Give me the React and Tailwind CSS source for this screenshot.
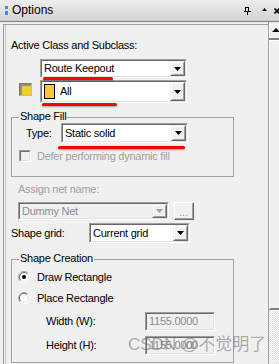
import React from "react";

function DropBtn({ disabled }) {
  return (
    <div className="w-[15px] h-full shrink-0 border border-t-[#f0f0f0] border-l-[#f0f0f0] border-b-[#696969] border-r-[#696969]">
      <div className="w-full h-full flex items-center justify-center bg-[#f0f0f0] border border-t-white border-l-white border-b-[#a0a0a0] border-r-[#a0a0a0]">
        <svg width="7" height="4" viewBox="0 0 7 4">
          <polygon points="0,0 7,0 3.5,4" fill={disabled ? "#a0a0a0" : "#000"} />
        </svg>
      </div>
    </div>
  );
}

function Sunken({ className, inner, children }) {
  return (
    <div className={"flex border border-t-[#a0a0a0] border-l-[#a0a0a0] border-b-white border-r-white " + className}>
      <div className={"flex flex-1 min-w-0 border border-t-[#696969] border-l-[#696969] border-b-[#e3e3e3] border-r-[#e3e3e3] " + inner}>
        {children}
      </div>
    </div>
  );
}

function Combo({ className, children, disabled }) {
  return (
    <Sunken className={className} inner={disabled ? "bg-[#f0f0f0]" : "bg-white"}>
      <div className={"flex flex-1 min-w-0 items-center pl-[2px] whitespace-nowrap " + (disabled ? "text-[#8c8c8c]" : "text-black")}>
        {children}
      </div>
      <DropBtn disabled={disabled} />
    </Sunken>
  );
}

function Radio({ checked }) {
  return (
    <svg width="12" height="12" viewBox="0 0 12 12" className="shrink-0">
      <circle cx="6" cy="6" r="5.5" fill="#fff" />
      <path d="M9.9 2.1 A5.5 5.5 0 0 0 2.1 9.9" stroke="#a0a0a0" strokeWidth="1" fill="none" />
      <path d="M9.9 2.1 A5.5 5.5 0 0 1 2.1 9.9" stroke="#ffffff" strokeWidth="1" fill="none" />
      <path d="M9.2 2.8 A4.5 4.5 0 0 0 2.8 9.2" stroke="#696969" strokeWidth="1" fill="none" />
      <path d="M9.2 2.8 A4.5 4.5 0 0 1 2.8 9.2" stroke="#e3e3e3" strokeWidth="1" fill="none" />
      {checked && <circle cx="6" cy="6" r="2" fill="#000" />}
    </svg>
  );
}

function Group({ title, className, children }) {
  return (
    <div className={"relative border border-[#a0a0a0] " + className}>
      <span className="absolute left-[7px] -top-[8px] px-[1px] bg-[#f0f0f0] leading-[13px] text-black whitespace-nowrap">
        {title}
      </span>
      {children}
    </div>
  );
}

export default function App() {
  return (
    <div className="relative w-[279px] h-[364px] overflow-hidden bg-[#f0f0f0] font-['Liberation_Sans',Arial,sans-serif] text-[11px] leading-[13px] tracking-[-0.25px] text-black">
      {/* Title bar */}
      <div className="flex items-center h-[22px] border-b border-[#7a7a7a] bg-gradient-to-b from-[#eeeeee] to-[#d2d2d2]">
        <div className="ml-[5px] flex flex-col gap-[2px]">
          <div className="w-[3px] h-[3px] bg-[#3a8ee6]" />
          <div className="w-[3px] h-[4px] bg-[#3a8ee6]" />
        </div>
        <span className="ml-[4px] flex-1 text-[12px] tracking-normal">Options</span>
        <svg width="7" height="8" viewBox="0 0 7 8" className="shrink-0">
          <rect x="1.5" y="0.5" width="3" height="4" fill="none" stroke="#000" strokeWidth="1" />
          <line x1="4.5" y1="0" x2="4.5" y2="5" stroke="#000" strokeWidth="1" />
          <line x1="0" y1="4.5" x2="7" y2="4.5" stroke="#000" strokeWidth="1" />
          <line x1="3.5" y1="5" x2="3.5" y2="8" stroke="#000" strokeWidth="1" />
        </svg>
        <svg width="5" height="3" viewBox="0 0 5 3" className="ml-[11px] shrink-0 -mt-[2px]">
          <polygon points="0,3 5,3 2.5,0" fill="#000" />
        </svg>
        <svg width="6" height="6" viewBox="0 0 6 6" className="ml-[7px] shrink-0 -mr-[1px]">
          <path d="M0.5 0.5 L5.5 5.5 M5.5 0.5 L0.5 5.5" stroke="#000" strokeWidth="1.6" />
        </svg>
      </div>

      {/* Body */}
      <div className="flex h-[342px]">
        <div className="w-[268px] pl-[3px] pt-[2px]">
          <div className="h-full border-l border-t border-[#a0a0a0] pl-[1px]">
            <div className="h-full border-l border-[#c8c8c8] flex flex-col">
              <div className="mt-[14px] ml-[5px]">Active Class and Subclass:</div>

              <Combo className="mt-[7px] ml-[34px] w-[147px] h-[19px]">Route Keepout</Combo>

              <div className="mt-[2px] flex h-[23px]">
                <div className="ml-[13px] mt-[3px] w-[13px] h-[13px] border border-t-[#7a7a7a] border-l-[#7a7a7a] border-b-[#bdbdbd] border-r-[#bdbdbd]">
                  <div className="w-full h-full border-[2px] border-t-[#8c8c8c] border-l-[#8c8c8c] border-r-0 border-b-0 bg-[#ffc82e]" />
                </div>
                <Combo className="ml-[8px] w-[147px] h-[23px]">
                  <div className="w-[11px] h-[15px] border border-black bg-[#ffc82e] shrink-0" />
                  <span className="ml-[5px]">All</span>
                </Combo>
              </div>

              <Group title="Shape Fill" className="mt-[14px] ml-[5px] w-[223px] h-[60px]">
                <div className="mt-[5px] flex items-center h-[20px]">
                  <span className="ml-[14px] w-[35px]">Type:</span>
                  <Combo className="w-[127px] h-[20px]">Static solid</Combo>
                </div>
                <div className="mt-[7px] ml-[7px] flex items-center h-[12px]">
                  <Sunken className="w-[12px] h-[12px] shrink-0" inner="bg-[#f0f0f0]" />
                  <span className="ml-[6px] text-[#a0a0a0] whitespace-nowrap">Defer performing dynamic fill</span>
                </div>
              </Group>

              <div className="mt-[6px] ml-[12px] text-[#a0a0a0]">Assign net name:</div>

              <div className="mt-[6px] flex h-[18px]">
                <Combo disabled className="ml-[12px] w-[151px] h-[18px]">Dummy Net</Combo>
                <div className="ml-[5px] w-[20px] h-[18px] border border-t-white border-l-white border-b-[#696969] border-r-[#696969]">
                  <div className="w-full h-full flex items-end justify-center pb-[1px] bg-[#f0f0f0] border-b border-r border-[#a0a0a0] text-[#a0a0a0] leading-[9px]">
                    ...
                  </div>
                </div>
              </div>

              <div className="mt-[3px] flex items-center h-[20px]">
                <span className="ml-[5px] w-[78px]">Shape grid:</span>
                <Combo className="w-[101px] h-[20px]">Current grid</Combo>
              </div>

              <Group title="Shape Creation" className="mt-[16px] ml-[5px] w-[223px] h-[104px]">
                <div className="mt-[11px] ml-[6px] flex items-center h-[12px]">
                  <Radio checked />
                  <span className="ml-[7px]">Draw Rectangle</span>
                </div>
                <div className="mt-[9px] ml-[6px] flex items-center h-[12px]">
                  <Radio />
                  <span className="ml-[7px]">Place Rectangle</span>
                </div>
                <div className="mt-[8px] flex items-center h-[19px]">
                  <span className="ml-[34px] w-[99px]">Width (W):</span>
                  <Sunken className="w-[70px] h-[19px]" inner="bg-[#f0f0f0] items-center pl-[2px] text-[#8c8c8c]">1155.0000</Sunken>
                </div>
                <div className="mt-[5px] flex items-center h-[19px]">
                  <span className="ml-[34px] w-[99px]">Height (H):</span>
                  <Sunken className="w-[70px] h-[19px]" inner="bg-[#f0f0f0] items-center pl-[2px] text-[#8c8c8c]">1155.0000</Sunken>
                </div>
              </Group>
            </div>
          </div>
        </div>

        {/* Scrollbar */}
        <div className="w-[11px] border-l border-[#a0a0a0] flex flex-col pt-[2px]">
          <div className="h-[14px] bg-[#f0f0f0] border-t border-l border-white">
            <svg width="8" height="4" viewBox="0 0 8 4" className="ml-[2px] mt-[3px]">
              <polygon points="0,4 8,4 4,0" fill="#000" />
            </svg>
          </div>
          <div className="h-[2px] bg-[#808080]" />
          <div className="h-[270px] bg-[#f0f0f0] border-l border-t border-white border-b-2 border-b-[#808080]" />
          <div className="flex-1 bg-[repeating-conic-gradient(#ffffff_0%_25%,#e2e2e2_0%_50%)] bg-[length:2px_2px]" />
        </div>
      </div>

      {/* Red annotation strokes */}
      <div className="absolute left-[43px] top-[77px] w-[70px] h-[3px] rounded-full bg-[#ff0000] shadow-[0_1px_2px_rgba(0,0,0,0.35)]" />
      <div className="absolute left-[42px] top-[103px] w-[75px] h-[3px] rounded-full bg-[#ff0000] shadow-[0_1px_2px_rgba(0,0,0,0.35)]" />
      <div className="absolute left-[58px] top-[146px] w-[127px] h-[3px] rounded-full bg-[#ff0000] shadow-[0_1px_2px_rgba(0,0,0,0.35)]" />

      {/* Watermark */}
      <span className="absolute left-[128px] top-[335px] text-[17px] leading-[20px] tracking-normal whitespace-nowrap text-[#6e6e6e]/55 font-['Liberation_Sans','Noto_Sans_CJK_SC',sans-serif]">
        CSDN @不觉明了
      </span>
    </div>
  );
}
